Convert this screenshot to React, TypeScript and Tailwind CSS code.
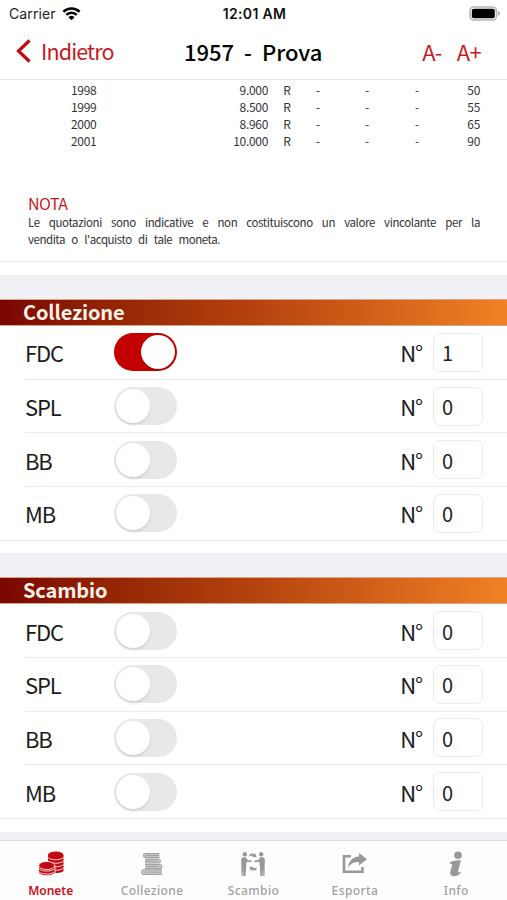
import { useState } from "react";
import clsx from "clsx";

const quotes = [
  { year: "1998", mintage: "9.000", price: "50" },
  { year: "1999", mintage: "8.500", price: "55" },
  { year: "2000", mintage: "8.960", price: "65" },
  { year: "2001", mintage: "10.000", price: "90" },
];

const grades = ["FDC", "SPL", "BB", "MB"];

function StatusBar() {
  return (
    <div className="flex h-[26px] items-center justify-between pl-[9px] pr-[7px] pt-[1px] font-['Inter'] text-[#222]">
      <div className="flex w-[120px] items-center gap-[6px] text-[14px] leading-none">
        <span className="tracking-[0.1px]">Carrier</span>
        <svg width="19" height="15" viewBox="0 0 19 15" fill="none" stroke="#000" strokeWidth="2.6">
          <path d="M1.4 5.8a11.6 11.6 0 0 1 16.2 0" />
          <path d="M4.3 8.9a7.4 7.4 0 0 1 10.4 0" />
          <path d="M9.5 14.3 6.5 11.2a4.3 4.3 0 0 1 6 0Z" fill="#000" stroke="none" />
        </svg>
      </div>
      <span className="text-[14px] font-semibold leading-none tracking-[0.3px] text-[#111]">12:01 AM</span>
      <div className="flex w-[120px] justify-end">
        <svg width="31" height="15" viewBox="0 0 31 15">
          <rect x="1" y="1" width="26.5" height="13" rx="4" fill="#fff" stroke="#b4b4b4" strokeWidth="1.6" />
          <rect x="2.8" y="2.8" width="23" height="9.4" rx="2" fill="#000" />
          <path d="M29 5v5c1.3-.4 1.8-1.3 1.8-2.5S30.3 5.4 29 5Z" fill="#aaa" />
        </svg>
      </div>
    </div>
  );
}

function NavBar() {
  return (
    <div className="grid h-[54px] grid-cols-[168px_139px_1fr] items-center border-b border-[#e9e9e9] pb-[4px] pl-[16px] pr-[26px] text-[22px] leading-none text-[#c61a1f]">
      <button className="flex items-center gap-[10px]">
        <svg width="15" height="24" viewBox="0 0 15 24" fill="none" stroke="#c40a10" strokeWidth="3.2">
          <path d="M13.5 1.5 2.5 12l11 10.5" />
        </svg>
        <span className="text-[21.5px] tracking-[-0.85px]">Indietro</span>
      </button>
      <h1 className="whitespace-nowrap font-medium tracking-normal text-black [word-spacing:5px]">1957 - Prova</h1>
      <div className="flex justify-end gap-[15px] tracking-[-0.7px]">
        <button>A-</button>
        <button>A+</button>
      </div>
    </div>
  );
}

function Quotes() {
  return (
    <div className="h-[182px] border-b border-[#ebebed] pl-[28px] pr-[27px] text-[12px] text-[#333]">
      <div className="pt-[1px]">
        {quotes.map((q) => (
          <div
            key={q.year}
            className="grid h-[17.2px] grid-cols-[43px_197px_40px_50px_50px_50px_1fr] items-center leading-none tracking-[-0.3px]"
          >
            <div className="col-start-2 flex justify-between">
              <span>{q.year}</span>
              <span>{q.mintage}</span>
            </div>
            <span className="pr-[2px] text-center">R</span>
            <span className="pl-[8px]">-</span>
            <span className="pl-[7px]">-</span>
            <span className="pl-[7px]">-</span>
            <span className="text-right">{q.price}</span>
          </div>
        ))}
      </div>
      <h2 className="mt-[43px] text-[16px] leading-[20px] tracking-[-0.5px] text-[#c61a1f]">NOTA</h2>
      <p className="mt-[1px] text-[11.5px] leading-[17px] tracking-[-0.45px] [word-spacing:4.2px]">
        <span className="block whitespace-nowrap tracking-[-0.4px] [text-align-last:justify] [white-space:normal] [word-spacing:3px]">
          Le quotazioni sono indicative e non costituiscono un valore vincolante per la
        </span>
        <span className="block">vendita o l'acquisto di tale moneta.</span>
      </p>
    </div>
  );
}

function Switch({ on, onChange }: { on: boolean; onChange: () => void }) {
  return (
    <button
      onClick={onChange}
      className={clsx(
        "flex h-[38px] w-[63px] items-center rounded-full p-[2px]",
        on ? "justify-end bg-[#c40000]" : "justify-start bg-[#e8e8ea]"
      )}
    >
      <span className="h-[34px] w-[34px] rounded-full bg-white shadow-[0_2px_3px_rgba(0,0,0,0.1)]" />
    </button>
  );
}

function GradeRow({ grade, initial, last }: { grade: string; initial: number; last: boolean }) {
  const [on, setOn] = useState(initial > 0);
  return (
    <div className={clsx("h-[53.7px]", last ? "border-b border-[#ebebed]" : "pl-[25px]")}>
      <div
        className={clsx(
          "flex h-full items-center pr-[24px]",
          last ? "pl-[25px]" : "border-b border-[#ebebed]"
        )}
      >
        <span className="w-[89px] text-[22px] leading-none tracking-[-1.1px] text-[#1c1c1c]">{grade}</span>
        <Switch on={on} onChange={() => setOn(!on)} />
        <span className="ml-auto text-[22px] leading-none tracking-[-1.2px] text-[#1c1c1c]">N°</span>
        <div className="ml-[11px] flex h-[39px] w-[50px] items-center rounded-[7px] border border-[#ebebed] pl-[8px] pt-[2px] text-[20px] leading-none text-[#222]">
          {initial}
        </div>
      </div>
    </div>
  );
}

function Section({ title, counts }: { title: string; counts: number[] }) {
  return (
    <section>
      <h2 className="flex h-[27px] items-center border-y border-[#d9a48c] bg-linear-to-r from-[#7a0500] via-[#b5430f] to-[#f08124] pb-[2px] pl-[23px] text-[20px] font-bold leading-none tracking-[-0.15px] text-[#fff0e8]">
        {title}
      </h2>
      {grades.map((g, i) => (
        <GradeRow key={g} grade={g} initial={counts[i]} last={i === grades.length - 1} />
      ))}
    </section>
  );
}

function CoinsIcon() {
  return (
    <svg width="26" height="26" viewBox="0 0 26 26" fill="#c40a10">
      <path d="M10 4v16c3 2.8 12.5 2.8 15.5 0V4Z" />
      <ellipse cx="17.7" cy="4" rx="7.7" ry="3.4" />
      <path
        d="M10 6.5c3 3 12.5 3 15.5 0M10 10c3 3 12.5 3 15.5 0M10 13.5c3 3 12.5 3 15.5 0M10 17c3 3 12.5 3 15.5 0"
        fill="none"
        stroke="#fff"
        strokeWidth="0.8"
      />
      <path d="M.5 14.5v7.5c3 3.6 13 3.6 16.5 0v-7.5Z" stroke="#fff" strokeWidth="0.8" />
      <ellipse cx="8.7" cy="14.5" rx="8" ry="4" stroke="#fff" strokeWidth="0.8" />
      <path d="M1 17.8c3 3 12.5 3 15.5 0M1 20.8c3 3 12.5 3 15.5 0" fill="none" stroke="#fff" strokeWidth="0.8" />
    </svg>
  );
}

function BooksIcon() {
  return (
    <svg width="22" height="24" viewBox="0 0 22 24" fill="#d2d2d2" stroke="#a2a2a2" strokeWidth="1.2">
      <path d="M18.5 1.7h-14a1.9 1.9 0 0 0 0 3.8h14M4.5 3.6H18" />
      <path d="M4 7.2h13.5a1.9 1.9 0 0 1 0 3.8H4M4 9.1h13" />
      <path d="M4 12.5h15a1.9 1.9 0 0 1 0 3.8H4M5 14.4h13" />
      <path d="M21 17.8H3a2.2 2.2 0 0 0 0 4.6h18M3.5 20.1H20" />
    </svg>
  );
}

function SwapIcon() {
  return (
    <svg width="26" height="26" viewBox="0 0 26 26" fill="#989898">
      <circle cx="4.8" cy="3.3" r="2.2" />
      <circle cx="21.2" cy="3.3" r="2.2" />
      <path d="M1.2 8 2.8 6.3h3L7.5 9l4 .5v1.7l-4.9-.5L6.2 15l-.6 10H3.4L3 16.500 2.700 25H1.500Z" />
      <path d="M24.8 8 23.2 6.3h-3L18.500 9l-4 .5v1.700l4.900-.5.4 4.300.6 10h2.200l.4-8.500.3 8.500h1.200Z" />
      <path d="M9 5.500 9.800 3.200 12.500 2.300 14.200 3.200 15.100 2 16.600 6.200l-4.500-.2.900-1.200c-1.300-.3-2.600 0-4 .7Z" />
      <path d="M17 16.500 16.200 18.800l-2.700.9-1.700-.9-.9 1.200-1.500-4.200 4.500.2-.9 1.200c1.300.3 2.600 0 4-.7Z" />
    </svg>
  );
}

function ExportIcon() {
  return (
    <svg width="25" height="21" viewBox="0 0 25 21" fill="#989898">
      <path d="M9 3.3H2v15.5h18.5V14" fill="none" stroke="#989898" strokeWidth="2.6" />
      <path d="M17 0l8 6.2-8 6.2V9c-4.500 0-7.500 1-11 5.500C7 8 10.500 4 17 3.500Z" />
    </svg>
  );
}

function InfoIcon() {
  return (
    <svg width="14" height="26" viewBox="0 0 14 26" fill="#989898">
      <circle cx="9" cy="4.2" r="3.8" />
      <path d="M1 11.5C4 9.5 7 9.2 12 9.2L9.200 20c-.5 2 .2 2 2.500.4l.2 1.400C8.500 26 0 27 1.300 20.500l1.700-6c.5-1.800-.1-1.900-2-1.500Z" />
    </svg>
  );
}

const tabs = [
  { label: "Monete", icon: <CoinsIcon /> },
  { label: "Collezione", icon: <BooksIcon /> },
  { label: "Scambio", icon: <SwapIcon /> },
  { label: "Esporta", icon: <ExportIcon /> },
  { label: "Info", icon: <InfoIcon /> },
];

function TabBar() {
  return (
    <nav className="grid h-[60px] grid-cols-5 border-t border-[#d9d9dd] bg-[#fdfdfd] font-['Noto_Sans']">
      {tabs.map((tab, i) => (
        <button key={tab.label} className="flex flex-col items-center pt-[9px]">
          <span className="flex h-[27px] items-center">{tab.icon}</span>
          <span
            className={clsx(
              "mt-[6px] text-[12px] leading-[16px]",
              i === 0 ? "font-semibold text-[#c8141a]" : "font-medium tracking-[0.4px] text-[#a0a0a0]"
            )}
          >
            {tab.label}
          </span>
        </button>
      ))}
    </nav>
  );
}

export default function App() {
  return (
    <div className="flex h-[900px] w-[507px] flex-col overflow-hidden bg-white font-['Noto_Sans_CJK_SC',sans-serif]">
      <StatusBar />
      <NavBar />
      <Quotes />
      <div className="mt-[13px] h-[24px] bg-[#f0f0f5]" />
      <Section title="Collezione" counts={[1, 0, 0, 0]} />
      <div className="mt-[12.5px] h-[24px] bg-[#f0f0f5]" />
      <Section title="Scambio" counts={[0, 0, 0, 0]} />
      <div className="mt-[12.5px] flex-1 bg-[#f0f0f5]" />
      <TabBar />
    </div>
  );
}
